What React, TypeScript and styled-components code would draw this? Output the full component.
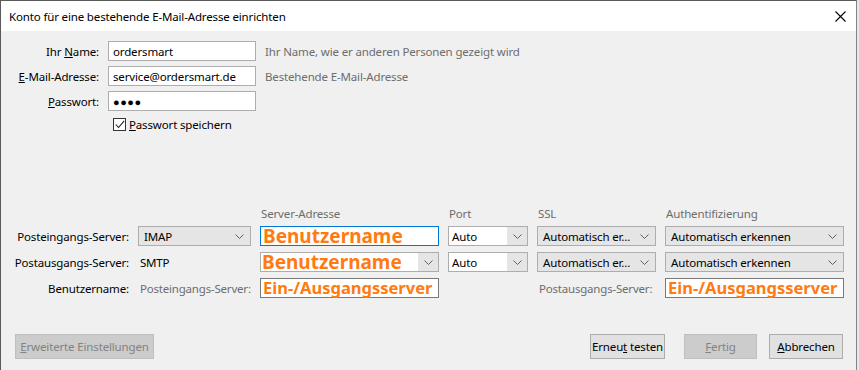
import styled, { createGlobalStyle } from 'styled-components';

const GlobalStyle = createGlobalStyle`
  html, body {
    margin: 0;
    padding: 0;
    background: #e8e8e8;
  }
  body {
    font-family: 'Segoe UI', 'Noto Sans', 'Open Sans', sans-serif;
    font-size: 11.5px;
    color: #000;
  }
`;

const Dialog = styled.div`
  width: 855px;
  height: 369px;
  border-top: 1px solid #5a5a5a;
  border-left: 1px solid #5a5a5a;
  border-right: 1px solid #838383;
  background: #f0f0f0;
  display: flex;
  flex-direction: column;
`;

const TitleBar = styled.div`
  height: 30px;
  background: #fff;
  display: flex;
  align-items: center;
  justify-content: space-between;
  padding: 0 9px 0 8px;
  flex: none;
`;

const Title = styled.span`
  font-size: 11.5px;
  letter-spacing: -0.15px;
`;

const CloseIcon = styled.svg`
  width: 11px;
  height: 11px;
  margin-right: 1px;
`;

const Body = styled.div`
  flex: 1;
  display: flex;
  flex-direction: column;
  padding: 10px 0 0 0;
`;

const AccountGrid = styled.div`
  display: grid;
  grid-template-columns: 98px 148px auto;
  grid-auto-rows: 20px;
  column-gap: 9px;
  row-gap: 5px;
  align-items: center;
`;

const FieldLabel = styled.label`
  text-align: right;
  white-space: nowrap;
  letter-spacing: -0.15px;
`;

const TextInput = styled.div<{ $focused?: boolean; $dark?: boolean }>`
  box-sizing: border-box;
  height: 20px;
  background: #fff;
  border: 1px solid ${p => (p.$focused ? '#0078d7' : p.$dark ? '#7a7a7a' : '#adadad')};
  display: flex;
  align-items: center;
  padding: 0 4px;
  white-space: nowrap;
  letter-spacing: -0.15px;
`;

const Hint = styled.span`
  color: #6d6d6d;
  white-space: nowrap;
  letter-spacing: -0.15px;
`;

const Dots = styled.span`
  font-size: 11px;
  letter-spacing: 0.5px;
`;

const CheckRow = styled.label`
  display: flex;
  align-items: center;
  gap: 3px;
  margin: 7px 0 0 112px;
  height: 12px;
  letter-spacing: -0.15px;
`;

const CheckBox = styled.span`
  box-sizing: border-box;
  width: 13px;
  height: 13px;
  border: 1px solid #333;
  background: #fff;
  display: flex;
  align-items: center;
  justify-content: center;
`;

const ServerGrid = styled.div`
  margin-top: 76px;
  display: grid;
  grid-template-columns: 128px 113px 179px 80px 119px 179px;
  grid-template-rows: 14px repeat(3, 20px);
  column-gap: 9px;
  row-gap: 6px;
  align-items: center;
`;

const ColHead = styled.span`
  color: #6d6d6d;
  padding-left: 1px;
  white-space: nowrap;
  letter-spacing: -0.15px;
`;

const Plain = styled.span<{ $muted?: boolean }>`
  color: ${p => (p.$muted ? '#6d6d6d' : '#000')};
  padding-left: 2px;
  white-space: nowrap;
  letter-spacing: -0.2px;
`;

const DropList = styled.div`
  box-sizing: border-box;
  height: 20px;
  background: #e5e5e5;
  border: 1px solid #adadad;
  display: flex;
  align-items: center;
  justify-content: space-between;
  padding: 0 6px 0 5px;
  white-space: nowrap;
  letter-spacing: -0.15px;
`;

const Combo = styled.div`
  box-sizing: border-box;
  height: 20px;
  background: #fff;
  border: 1px solid #adadad;
  display: flex;
  align-items: stretch;
`;

const ComboText = styled.span`
  flex: 1;
  display: flex;
  align-items: center;
  padding-left: 3px;
  white-space: nowrap;
  letter-spacing: -0.15px;
`;

const ComboButton = styled.span`
  width: 20px;
  flex: none;
  background: #e5e5e5;
  display: flex;
  align-items: center;
  justify-content: center;
`;

const Overlay = styled.span<{ $size: number }>`
  color: #ff7b12;
  font-weight: 700;
  font-size: ${p => p.$size}px;
  line-height: 18px;
  white-space: nowrap;
  letter-spacing: 0;
  margin-left: -2px;
`;

const Footer = styled.div`
  margin-top: auto;
  height: 25px;
  margin-bottom: 11px;
  display: flex;
  align-items: center;
  padding: 0 13px 0 14px;
`;

const Button = styled.button<{ $width: number; $disabled?: boolean }>`
  box-sizing: border-box;
  height: 25px;
  width: ${p => p.$width}px;
  font-family: inherit;
  font-size: 11.5px;
  letter-spacing: -0.15px;
  white-space: nowrap;
  padding: 0;
  background: ${p => (p.$disabled ? '#cccccc' : '#e1e1e1')};
  color: ${p => (p.$disabled ? '#838383' : '#000')};
  border: 1px solid ${p => (p.$disabled ? '#bfbfbf' : '#adadad')};
`;

const Spacer = styled.div`
  flex: 1;
`;

const Gap = styled.div<{ $w: number }>`
  width: ${p => p.$w}px;
`;

function Chevron() {
  return (
    <svg width="9" height="5" viewBox="0 0 9 5">
      <polyline points="0.5,0.5 4.5,4.5 8.5,0.5" fill="none" stroke="#606060" strokeWidth="1" />
    </svg>
  );
}

function Select({ value }: { value: string }) {
  return (
    <DropList>
      <span>{value}</span>
      <Chevron />
    </DropList>
  );
}

function ComboBox({ children }: { children: React.ReactNode }) {
  return (
    <Combo>
      <ComboText>{children}</ComboText>
      <ComboButton>
        <Chevron />
      </ComboButton>
    </Combo>
  );
}

export default function App() {
  return (
    <>
      <GlobalStyle />
      <Dialog>
        <TitleBar>
          <Title>Konto für eine bestehende E-Mail-Adresse einrichten</Title>
          <CloseIcon viewBox="0 0 11 11">
            <path d="M0.5 0.5 L10.5 10.5 M10.5 0.5 L0.5 10.5" stroke="#000" strokeWidth="1.1" />
          </CloseIcon>
        </TitleBar>
        <Body>
          <AccountGrid>
            <FieldLabel>
              Ihr <u>N</u>ame:
            </FieldLabel>
            <TextInput>ordersmart</TextInput>
            <Hint>Ihr Name, wie er anderen Personen gezeigt wird</Hint>
            <FieldLabel>
              <u>E</u>-Mail-Adresse:
            </FieldLabel>
            <TextInput>service@ordersmart.de</TextInput>
            <Hint>Bestehende E-Mail-Adresse</Hint>
            <FieldLabel>
              <u>P</u>asswort:
            </FieldLabel>
            <TextInput>
              <Dots>●●●●</Dots>
            </TextInput>
            <span />
          </AccountGrid>
          <CheckRow>
            <CheckBox>
              <svg width="10" height="9" viewBox="0 0 10 9">
                <polyline points="0.8,4.5 3.5,7.5 9.2,0.8" fill="none" stroke="#222" strokeWidth="1.1" />
              </svg>
            </CheckBox>
            <span>
              <u>P</u>asswort speichern
            </span>
          </CheckRow>

          <ServerGrid>
            <span />
            <span />
            <ColHead>Server-Adresse</ColHead>
            <ColHead>Port</ColHead>
            <ColHead>SSL</ColHead>
            <ColHead>Authentifizierung</ColHead>

            <FieldLabel>Posteingangs-Server:</FieldLabel>
            <Select value="IMAP" />
            <TextInput $focused>
              <Overlay $size={19}>Benutzername</Overlay>
            </TextInput>
            <ComboBox>Auto</ComboBox>
            <Select value="Automatisch er..." />
            <Select value="Automatisch erkennen" />

            <FieldLabel>Postausgangs-Server:</FieldLabel>
            <Plain>SMTP</Plain>
            <ComboBox>
              <Overlay $size={19}>Benutzername</Overlay>
            </ComboBox>
            <ComboBox>Auto</ComboBox>
            <Select value="Automatisch er..." />
            <Select value="Automatisch erkennen" />

            <FieldLabel>Benutzername:</FieldLabel>
            <Plain $muted>Posteingangs-Server:</Plain>
            <TextInput $dark>
              <Overlay $size={16.5}>Ein-/Ausgangsserver</Overlay>
            </TextInput>
            <span />
            <Plain $muted>Postausgangs-Server:</Plain>
            <TextInput $dark>
              <Overlay $size={16.5}>Ein-/Ausgangsserver</Overlay>
            </TextInput>
          </ServerGrid>

          <Footer>
            <Button $width={139} $disabled>
              <u>E</u>rweiterte Einstellungen
            </Button>
            <Spacer />
            <Button $width={75}>
              Erneu<u>t</u> testen
            </Button>
            <Gap $w={19} />
            <Button $width={73} $disabled>
              <u>F</u>ertig
            </Button>
            <Gap $w={12} />
            <Button $width={74}>
              <u>A</u>bbrechen
            </Button>
          </Footer>
        </Body>
      </Dialog>
    </>
  );
}
